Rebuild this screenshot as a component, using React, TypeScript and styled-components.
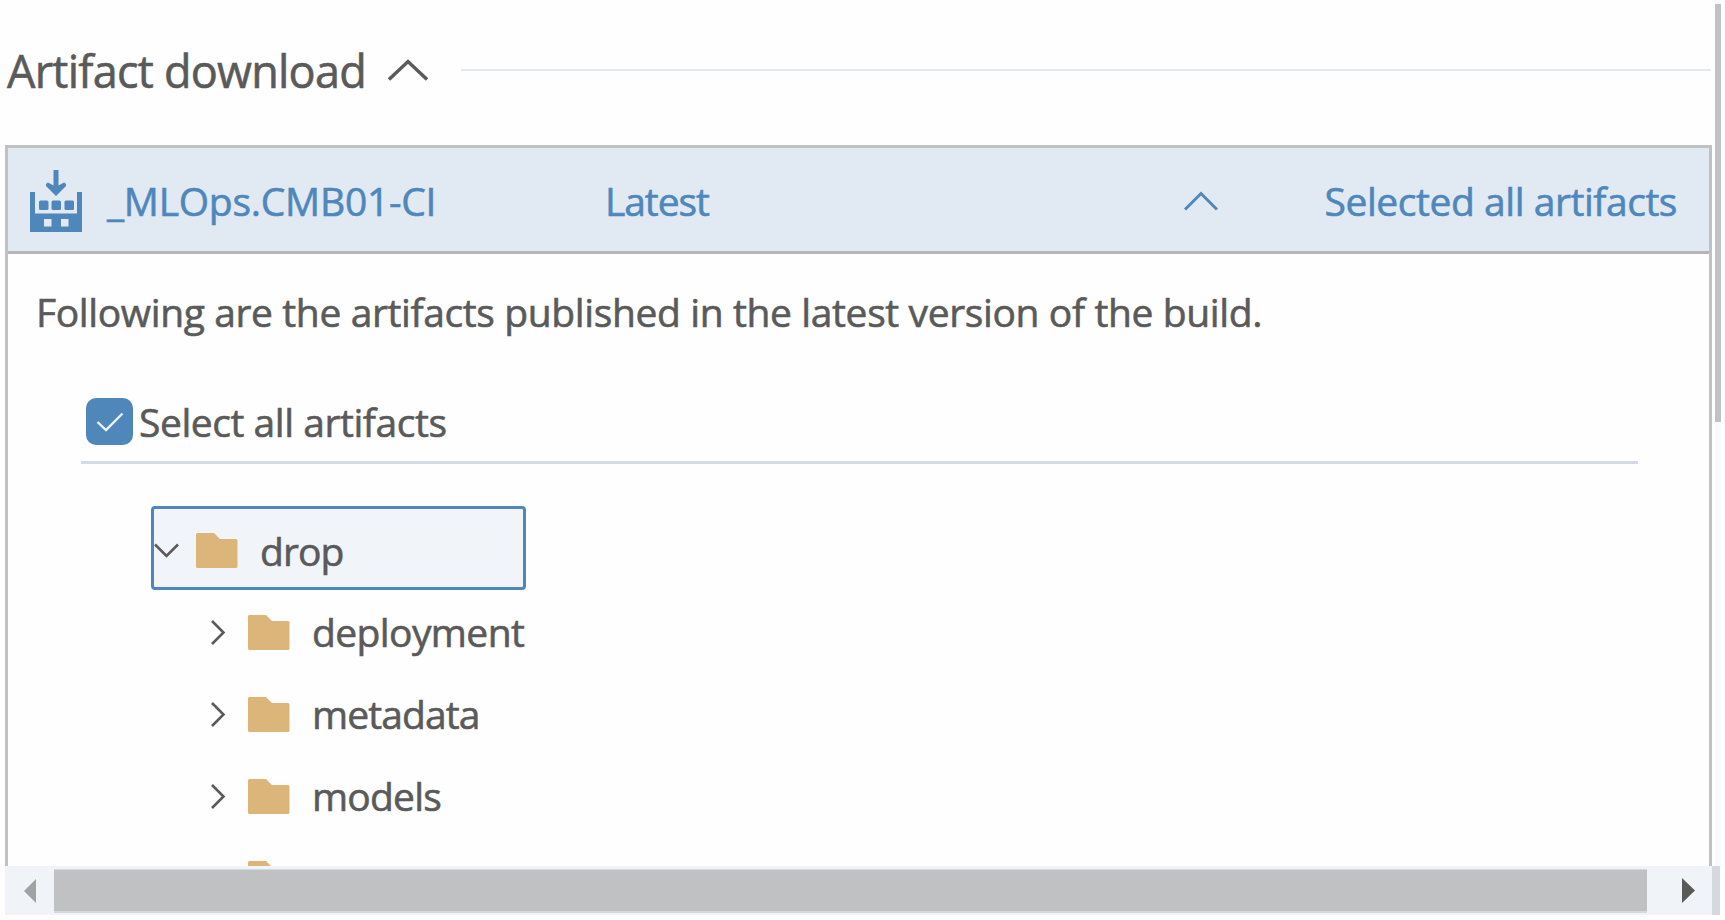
import React from "react";
import styled, { createGlobalStyle } from "styled-components";

const ink = "#5a5a5a";
const blue = "#4f87bb";
const grey = "#bfc1c3";

const GlobalStyle = createGlobalStyle`
  * { box-sizing: border-box; }
  body { margin: 0; background: #fefefe; overflow: hidden; }
`;

const Page = styled.div`
  width: 1725px;
  height: 920px;
  display: flex;
  flex-direction: column;
  overflow: hidden;
  font-family: "Open Sans", "Noto Sans", sans-serif;
  color: ${ink};
`;

const Viewport = styled.div`
  height: 866px;
  display: flex;
  overflow: hidden;
`;

const Content = styled.main`
  width: 1712px;
  flex: none;
  padding-left: 5px;
  display: flex;
  flex-direction: column;
`;

const Label = styled.span<{ $size?: number; $spacing?: number }>`
  font-size: ${(p) => p.$size ?? 39}px;
  letter-spacing: ${(p) => p.$spacing ?? 0}px;
  line-height: 54px;
  white-space: nowrap;
  -webkit-text-stroke: 0.6px currentColor;
`;

const SectionTitle = styled.header`
  height: 145px;
  flex: none;
  padding: 0 1px 5px 2px;
  display: flex;
  align-items: center;
`;

const TitleText = styled.div`
  width: 381px;
  flex: none;
  padding-top: 1px;
`;

const TitleRule = styled.div`
  flex: 1;
  height: 2px;
  margin-left: 33px;
  background: #e1e9f3;
`;

const Panel = styled.section`
  flex: none;
  height: 760px;
  border: 3px solid ${grey};
`;

const PanelHeader = styled.div`
  height: 106px;
  padding: 2px 32px 0 22px;
  display: flex;
  align-items: center;
  background: #e1e9f3;
  border-bottom: 3px solid #b3b5b7;
  color: ${blue};
`;

const SourceName = styled.div`
  width: 523px;
  flex: none;
  padding-left: 25px;
  display: flex;
`;

const Version = styled.div`
  width: 579px;
  flex: none;
`;

const Selection = styled.div`
  margin-left: auto;
  display: flex;
`;

const Description = styled.p`
  margin: 31px 0 0 28px;
  height: 54px;
`;

const SelectAll = styled.label`
  width: 1557px;
  height: 125px;
  margin-left: 73px;
  padding: 43px 0 0 5px;
  display: flex;
  align-items: center;
  gap: 6px;
  border-bottom: 3px solid #d3dce6;
`;

const CheckBox = styled.span`
  width: 47px;
  height: 47px;
  flex: none;
  display: flex;
  align-items: center;
  justify-content: center;
  border-radius: 10px;
  background: ${blue};
`;

const Tree = styled.div`
  margin: 42px 0 0 143px;
  width: 375px;
`;

const Row = styled.div<{ $selected?: boolean }>`
  height: ${(p) => (p.$selected ? 84 : 82)}px;
  padding-top: ${(p) => (p.$selected ? 5 : 2)}px;
  padding-left: ${(p) => (p.$selected ? 0 : 59)}px;
  display: flex;
  align-items: center;
  border: ${(p) => (p.$selected ? `3px solid ${blue}` : "none")};
  border-radius: 4px;
  background: ${(p) => (p.$selected ? "#f1f5f9" : "transparent")};
`;

const Twisty = styled.span<{ $open?: boolean }>`
  width: ${(p) => (p.$open ? 42 : 38)}px;
  flex: none;
  display: flex;
  align-items: center;
`;

const FolderSlot = styled.span`
  width: 64px;
  flex: none;
  display: flex;
`;

const VerticalBar = styled.div`
  width: 12px;
  padding: 4px 0 0 3px;
  background: linear-gradient(to right, transparent 3px, #f7f9fb 3px, #f7f9fb 9px, transparent 9px);
`;

const VerticalThumb = styled.div`
  width: 6px;
  height: 418px;
  background: ${grey};
`;

const HorizontalBar = styled.div`
  height: 49px;
  width: 1715px;
  margin-left: 5px;
  display: flex;
  align-items: center;
  background: #f0f4f9;
`;

const ArrowButton = styled.span<{ $width: number; $pad: number }>`
  width: ${(p) => p.$width}px;
  padding-left: ${(p) => p.$pad}px;
  flex: none;
  display: flex;
`;

const HorizontalThumb = styled.div`
  width: 1593px;
  height: 44px;
  background: ${grey};
  border-top: 1px solid #d3dadf;
  border-bottom: 2px solid #d3dadf;
`;

const Corner = styled.div`
  width: 8px;
  height: 49px;
  margin-left: auto;
  background: #d3d9de;
`;

const Chevron = ({ w, h, d, color = ink, sw = 2.6 }: { w: number; h: number; d: string; color?: string; sw?: number }) => (
  <svg width={w} height={h} viewBox={`0 0 ${w} ${h}`} fill="none" stroke={color} strokeWidth={sw}>
    <path d={d} />
  </svg>
);

const BuildIcon = () => (
  <svg width="52" height="62" viewBox="0 0 52 62" fill={blue}>
    <path d="M23.500 0h5v15.500l5.500-3q2.500 1 2 3.500L26 26 16 16q-.500-2.500 2-3.500l5.500 3z" />
    <rect x="9" y="30.500" width="9.500" height="9.500" rx="1.500" />
    <rect x="21.500" y="30.500" width="9.500" height="9.500" rx="1.500" />
    <rect x="34.500" y="30.500" width="9.500" height="9.500" rx="1.500" />
    <path fillRule="evenodd" d="M0 22h5v21.500h42V22h5v40H0zM14 49v7.500h7.500V49zM31 49v7.500h7.500V49z" />
  </svg>
);

const Folder = () => (
  <svg width="42" height="35" viewBox="0 0 42 35" fill="#dbb57a">
    <path d="M1.500 0H18l6 6H40q1.500 0 1.500 1.500v26q0 1.500-1.500 1.500H1.500Q0 35 0 33.500v-32Q0 0 1.500 0z" />
  </svg>
);

const folders: { name: string; spacing: number }[] = [
  { name: "deployment", spacing: -0.6 },
  { name: "metadata", spacing: -0.9 },
  { name: "models", spacing: -0.8 },
];

export default function App() {
  return (
    <>
      <GlobalStyle />
      <Page>
        <Viewport>
          <Content>
            <SectionTitle>
              <TitleText>
                <Label $size={45} $spacing={-0.75}>Artifact download</Label>
              </TitleText>
              <Chevron w={40} h={22} d="M1 20.500L20 2.500l19 18" sw={3.4} />
              <TitleRule />
            </SectionTitle>
            <Panel>
              <PanelHeader>
                <BuildIcon />
                <SourceName>
                  <Label $spacing={-0.25}>_MLOps.CMB01-CI</Label>
                </SourceName>
                <Version>
                  <Label $spacing={-1.1}>Latest</Label>
                </Version>
                <Chevron w={34} h={20} d="M1 18.500L17 2.500l16 16" color={blue} sw={3} />
                <Selection>
                  <Label $spacing={-0.45}>Selected all artifacts</Label>
                </Selection>
              </PanelHeader>
              <Description>
                <Label $spacing={-0.38}>Following are the artifacts published in the latest version of the build.</Label>
              </Description>
              <SelectAll>
                <CheckBox>
                  <Chevron w={28} h={20} d="M1.500 10l8.500 8L26.500 1.500" color="#eef2f6" sw={2.4} />
                </CheckBox>
                <Label $spacing={-0.45}>Select all artifacts</Label>
              </SelectAll>
              <Tree>
                <Row $selected>
                  <Twisty $open>
                    <Chevron w={25} h={15} d="M1 1.500l11.500 11.500L24 1.500" />
                  </Twisty>
                  <FolderSlot>
                    <Folder />
                  </FolderSlot>
                  <Label $spacing={-0.9}>drop</Label>
                </Row>
                {folders.map((f) => (
                  <Row key={f.name}>
                    <Twisty>
                      <Chevron w={16} h={25} d="M2 1l11.500 11.500L2 24" />
                    </Twisty>
                    <FolderSlot>
                      <Folder />
                    </FolderSlot>
                    <Label $spacing={f.spacing}>{f.name}</Label>
                  </Row>
                ))}
                <Row>
                  <Twisty />
                  <Folder />
                </Row>
              </Tree>
            </Panel>
          </Content>
          <VerticalBar>
            <VerticalThumb />
          </VerticalBar>
        </Viewport>
        <HorizontalBar>
          <ArrowButton $width={49} $pad={19}>
            <svg width="12" height="24" viewBox="0 0 12 24" fill="#a0a2a4">
              <path d="M12 0v24L0 12z" />
            </svg>
          </ArrowButton>
          <HorizontalThumb />
          <ArrowButton $width={60} $pad={35}>
            <svg width="13" height="25" viewBox="0 0 13 25" fill={ink}>
              <path d="M0 0v25l13-12.500z" />
            </svg>
          </ArrowButton>
          <Corner />
        </HorizontalBar>
      </Page>
    </>
  );
}
